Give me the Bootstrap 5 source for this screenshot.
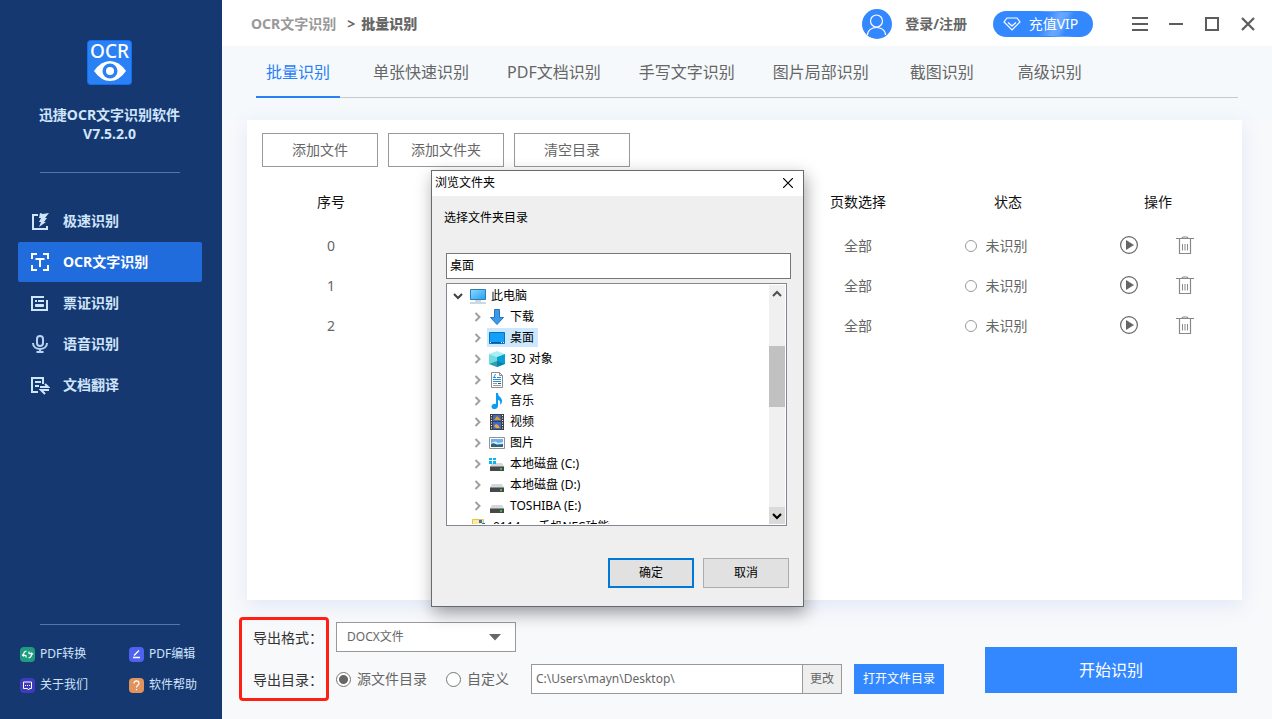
<!DOCTYPE html>
<html lang="zh-CN">
<head>
<meta charset="utf-8">
<meta name="viewport" content="width=device-width, initial-scale=1">
<title>迅捷OCR文字识别软件</title>
<link href="https://cdn.jsdelivr.net/npm/bootstrap@5.3.0/dist/css/bootstrap.min.css" rel="stylesheet">
<style>
body{font-family:"Noto Sans","Noto Sans CJK SC",sans-serif;font-size:14px;line-height:20px;color:#666;background:#f8f9fb}
svg{display:block;flex:none}
a{color:inherit;text-decoration:none}
/* sidebar */
.side{width:222px;flex:none;background:#163871;color:#cfe5fc}
.brand{padding:40px 3px 29px 0;line-height:19px}
.brand svg{margin:0 auto 20px}
.rule{height:1px;margin:0 42px 0 40px;background:#5675ac}
.menu{padding:28px 20px 0 18px;gap:1px}
.menu a{height:40px;gap:13px;padding-left:12px;border-radius:2px;font-weight:700}
.menu a.active{background:#206cdc;color:#fff}
.tools{display:grid;grid-template-columns:109px auto;row-gap:11px;padding:19px 0 24px 20px;font-size:12px}
.tools a{gap:5px}
/* title bar */
.topbar{height:46px;background:#fff;padding:2px 16px 0 29px;font-weight:700}
.crumb{gap:11px}
.crumb a{color:#999}
.crumb b{margin-left:-5px}
.user{gap:13px;margin-right:26px}
.vip{width:100px;height:26px;border-radius:13px;padding:0 5px 0 0;color:#fff;font-size:14px;line-height:20px;gap:8px;background:linear-gradient(115deg,#3388ff 50%,#6aa8ff 62%,#5ea1ff 68%,#3388ff 74%)}
.vip:hover{color:#fff}
.winbtns{gap:20px;margin-left:39px}
.winbtns button{width:16px;height:16px;padding:0;border:0;background:none}
/* tabs */
.tabzone{background:#f5f9fc;padding:0 34px 22px;height:74px}
.tabzone nav{gap:24px;height:52px;border-bottom:1px solid #c6cbd0}
.tabzone nav a{font-size:16px;min-width:84px;padding:0 7px;height:52px;line-height:52px;text-align:center;white-space:nowrap}
.tabzone nav a.active{color:#2a80f5;border-bottom:2px solid #2a80f5;margin-right:2px}
/* file list */
.files{margin:0 30px 0 25px;background:#fff;box-shadow:0 6px 20px rgba(90,130,220,.14)}
.filebtns{padding:13px 15px 0;gap:10px}
.filebtns .btn{width:116px;height:34px}
.flat{border:1px solid #999;border-radius:0;background:#fff;color:#666;font-size:14px;line-height:20px;padding:0}
.listing{padding:11px 9px 0}
.listing table{table-layout:fixed;margin:0}
.listing col.fixed{width:150px}
.listing th,.listing td{padding:0;text-align:center;vertical-align:middle;height:40px;color:#666}
.listing th{height:48px;color:#111;font-weight:400}
.state{gap:9px;padding-right:24px}
.state input{appearance:none;width:12px;height:12px;border:1px solid #999;border-radius:50%;margin:0;background:#fff}
.ops{gap:38px;padding:0 2px 2px 0}
.ops button{padding:0;border:0;background:none}
/* export */
.export{padding:17px 35px 18px 17px}
.marked{width:90px;height:84px;border:3px solid #fe2015;border-radius:4px;padding:7px 0 0 11px;line-height:22px;gap:20px;color:#333;white-space:nowrap}
.choices{padding:5px 0 0 7px;gap:12px}
.choices>div{height:30px}
.fmt{width:180px;height:30px;border:1px solid #999;border-radius:0;background:#fff;color:#666;font-size:12px;padding:0 10px;line-height:18px;appearance:none}
.fmtbox{position:relative}
.fmtbox svg{position:absolute;right:15px;top:12px;pointer-events:none}
.pick{gap:6px;margin-right:19px}
.pick+.pick{margin-right:22px}
.pick input{appearance:none;width:15px;height:15px;margin:0;border:1px solid #777;border-radius:50%;background:#fff}
.pick input:checked{background:radial-gradient(circle,#666 0 4px,#fff 5px)}
.path{width:271px;border:1px solid #999;border-right:0;padding:0 4px;font-size:12px;color:#666;background:#fff}
.change{width:40px;border:1px solid #999;background:#eee;font-size:12px;color:#666;padding:0}
.blue{background:#3388ff;color:#fff;border:0;border-radius:0;padding:0}
.blue:hover{background:#2a7af0;color:#fff}
.open{width:90px;height:30px;font-size:12px;margin-left:12px}
.start{width:252px;height:46px;font-size:16px;margin-top:30px}
/* folder dialog: a window floating over the page */
.dlg{position:absolute;left:431px;top:170px;width:373px;background:#efefef;border:1px solid #666b70;box-shadow:2px 6px 16px rgba(0,0,0,.36);font-size:12px;line-height:18px;color:#000}
.dlghead{height:25px;background:#fff;padding:0 10px 1px 3px}
.dlghead button{padding:0;border:0;background:none}
.dlgbody{padding:13px 12px 18px 14px}
.dlgbody .hint{margin:0 0 26px -2px;display:block}
.folder{width:100%;height:26px;border:1px solid #777;padding:0 3px 2px;background:#fff;color:#000}
.tree{margin:4px 4px 32px 0;height:243px;border:1px solid #828790;background:#fff;padding:1px}
.tree ul{list-style:none;margin:0;padding:0;overflow:hidden}
.tree li{height:21px;gap:5px;padding-left:26px;white-space:nowrap}
.tree li.rootrow{padding-left:5px;gap:7px}
.tree li .node{height:19px;padding:0 4px 0 2px;gap:5px}
.tree li.rootrow .node{padding-left:0}
.tree li .picked{background:#cce8ff}
.tree li.tail{padding-left:24px}
.tail .gapped{margin-left:13px}
.bar{width:16px;background:#f0f0f0;flex:none}
.thumb{height:61px;margin-top:44px;background:#c1c1c1}
.dlgbtns{gap:9px;padding-right:2px}
.dlgbtns .btn{width:86px;height:30px;border:1px solid #adadad;border-radius:0;background:#e1e1e1;font-size:12px;line-height:18px;padding:0;color:#000}
.dlgbtns .btn.main{border:2px solid #0078d7}
</style>
</head>
<body>
<svg width="0" height="0" class="position-absolute" aria-hidden="true">
<defs>
<linearGradient id="gsky" x1="0" y1="0" x2="1" y2="1"><stop offset="0" stop-color="#8fd8ff"/><stop offset="1" stop-color="#22a0f0"/></linearGradient>
<symbol id="chev" viewBox="0 0 8 10"><path d="M1.500 1l4 4-4 4" fill="none" stroke="#a0a0a0" stroke-width="2"/></symbol>
<symbol id="play" viewBox="0 0 18 18"><circle cx="9" cy="9" r="8.400" fill="none" stroke="#666" stroke-width="1.200"/><path d="M6 4v10l8-5z" fill="#666"/></symbol>
<symbol id="bin" viewBox="0 0 18 18"><path d="M0 2.500h18M6 2.500q0-1.500 1.500-1.500h3q1.500 0 1.500 1.500M3.500 2.500v15h11v-15" fill="none" stroke="#888" stroke-width="1.200"/><path d="M6.500 8v6.500M9 8v6.500M11.500 8v6.500" stroke="#888"/></symbol>
<symbol id="disk" viewBox="0 0 16 16"><path d="M3 7h10l2 3.500H1z" fill="#d5d8da"/><path d="M1 10.500h14V15H1z" fill="#46494b"/><path d="M1 10.500h14" stroke="#8c9092"/><path d="M11 13h2" stroke="#39e639" stroke-width="1.500"/></symbol>
</defs>
</svg>
<div class="d-flex min-vh-100">
<aside class="side d-flex flex-column">
<div class="brand text-center fw-bold">
<svg width="45" height="45" viewBox="0 0 45 45"><rect x=".5" y=".5" width="44" height="44" rx="3" fill="#2a80f5" stroke="#1270f3"/><text x="22.500" y="18" text-anchor="middle" font-size="19" font-weight="500" fill="#fff">OCR</text><path d="M7 31Q14 21 23 21T39 31Q32 41 23 41T7 31z" fill="#fff"/><circle cx="23" cy="31" r="7.500" fill="#2a80f5"/><circle cx="23" cy="31" r="4" fill="#fff"/></svg>
<div>迅捷OCR文字识别软件</div><div>V7.5.2.0</div>
</div>
<div class="rule"></div>
<nav class="menu d-flex flex-column">
<a href="#" class="d-flex align-items-center"><svg width="20" height="20" viewBox="0 0 20 20"><path d="M8 4H3v14h14v-3" fill="none" stroke="#cfe5fc" stroke-width="2"/><path d="M10 2l3 1 6-1-4 5h2l-3 4h2l-7 5 2-5H9l2-4H9z" fill="#cfe5fc"/></svg>极速识别</a>
<a href="#" class="active d-flex align-items-center"><svg width="20" height="20" viewBox="0 0 20 20" fill="none" stroke="#fff" stroke-width="2"><path d="M2 7V2h5M13 2h5v5M18 13v5h-5M7 18H2v-5M5.500 7h9M10 7v8"/></svg>OCR文字识别</a>
<a href="#" class="d-flex align-items-center"><svg width="20" height="20" viewBox="0 0 20 20" fill="none" stroke="#cfe5fc" stroke-width="2"><path d="M14 4H2v13h15V7"/><path d="M5 8h2M8 8h6"/><path d="M5.500 11.500h8v2h-8z" fill="#cfe5fc" stroke-width="1"/></svg>票证识别</a>
<a href="#" class="d-flex align-items-center"><svg width="20" height="20" viewBox="0 0 20 20" fill="none" stroke="#b9d4f3" stroke-width="2"><rect x="7" y="2" width="6" height="10" rx="3"/><path d="M3 9c0 8 14 8 14 0M10 15v3M6.500 18h7"/></svg>语音识别</a>
<a href="#" class="d-flex align-items-center"><svg width="20" height="20" viewBox="0 0 20 20" fill="none" stroke="#cfe5fc" stroke-width="2"><path d="M8 17H2V3h11v6M5 7h6M5 11h4M10 12h8l-3-3M19 15h-8l4 4"/></svg>文档翻译</a>
</nav>
<div class="rule mt-auto"></div>
<div class="tools">
<a href="#" class="d-flex align-items-center"><svg width="15" height="15" viewBox="0 0 15 15" fill="none" stroke="#fff"><rect width="15" height="15" rx="4" fill="#1f9b80" stroke="none"/><path d="M6.500 4Q3.500 4.500 3.500 8.500M2 7.500l1.500 1.500L5.500 8M8.500 11q3-.5 3-4.500M13 7.500L11.500 6 9.500 7M6 8v2.500M9 4.500V7" stroke-width="1.200"/></svg>PDF转换</a>
<a href="#" class="d-flex align-items-center"><svg width="15" height="15" viewBox="0 0 15 15" fill="none" stroke="#fff"><rect width="15" height="15" rx="4" fill="#4e62f0" stroke="none"/><path d="M4 10.500h7M5 8.500l5-5" stroke-width="1.400"/></svg>PDF编辑</a>
<a href="#" class="d-flex align-items-center"><svg width="15" height="15" viewBox="0 0 15 15" fill="none" stroke="#fff"><rect width="15" height="15" rx="4" fill="#3e3cba" stroke="none"/><path d="M3.500 4h8v6.500h-2l-1 1.500-1-1.500h-4z"/><path d="M5 7.500h5" stroke-dasharray="1 1"/></svg>关于我们</a>
<a href="#" class="d-flex align-items-center"><svg width="15" height="15" viewBox="0 0 15 15" fill="none" stroke="#fff"><rect width="15" height="15" rx="4" fill="#e0935c" stroke="none"/><path d="M5 5.500c0-3.500 5-3.500 5 0 0 2-2.500 1.500-2.500 4M7.500 11v1.300" stroke-width="1.200"/></svg>软件帮助</a>
</div>
</aside>

<main class="flex-grow-1 d-flex flex-column">
<header class="topbar d-flex align-items-center">
<div class="crumb d-flex"><a href="#">OCR文字识别</a><span>&gt;</span><b>批量识别</b></div>
<a href="#" class="user d-flex align-items-center ms-auto"><svg width="30" height="30" viewBox="0 0 30 30"><circle cx="15" cy="15" r="15" fill="#3388ff"/><path d="M5.500 26c0-10 18-10 18 0" fill="none" stroke="#fff" stroke-width="1.200"/><circle cx="14.500" cy="12" r="6" fill="none" stroke="#fff" stroke-width="1.200"/></svg>登录/注册</a>
<button type="button" class="btn vip d-flex align-items-center justify-content-center"><svg width="18" height="14" viewBox="0 0 18 14" fill="none" stroke="#fff" stroke-width="1.200"><path d="M4 1h10l3 4-8 8-8-8zM5 5.500L9 9l4-3.500"/></svg>充值VIP</button>
<div class="winbtns d-flex">
<button type="button" aria-label="菜单"><svg width="16" height="16" viewBox="0 0 16 16"><path d="M0 2h16M0 8h16M0 14h16" stroke="#5c5c5c" stroke-width="2"/></svg></button>
<button type="button" aria-label="最小化"><svg width="16" height="16" viewBox="0 0 16 16"><path d="M1 8h14" stroke="#5c5c5c" stroke-width="2"/></svg></button>
<button type="button" aria-label="最大化"><svg width="16" height="16" viewBox="0 0 16 16"><path d="M2 2h12v12H2z" fill="none" stroke="#5c5c5c" stroke-width="2"/></svg></button>
<button type="button" aria-label="关闭"><svg width="16" height="16" viewBox="0 0 16 16"><path d="M2 2l12 12M14 2L2 14" stroke="#5c5c5c" stroke-width="2.200"/></svg></button>
</div>
</header>

<div class="tabzone">
<nav class="d-flex"><a href="#" class="active">批量识别</a><a href="#">单张快速识别</a><a href="#">PDF文档识别</a><a href="#">手写文字识别</a><a href="#">图片局部识别</a><a href="#">截图识别</a><a href="#">高级识别</a></nav>
</div>

<section class="files flex-grow-1">
<div class="filebtns d-flex"><button type="button" class="btn flat">添加文件</button><button type="button" class="btn flat">添加文件夹</button><button type="button" class="btn flat">清空目录</button></div>
<div class="listing">
<table class="table table-borderless">
<colgroup><col class="fixed"><col><col class="fixed"><col class="fixed"><col class="fixed"></colgroup>
<thead><tr><th>序号</th><th></th><th>页数选择</th><th>状态</th><th>操作</th></tr></thead>
<tbody>
<tr><td>0</td><td></td><td>全部</td><td><label class="state d-flex align-items-center justify-content-center"><input type="radio" name="s0">未识别</label></td><td><div class="ops d-flex justify-content-center"><button type="button" aria-label="开始"><svg width="18" height="18"><use href="#play"/></svg></button><button type="button" aria-label="删除"><svg width="18" height="18"><use href="#bin"/></svg></button></div></td></tr>
<tr><td>1</td><td></td><td>全部</td><td><label class="state d-flex align-items-center justify-content-center"><input type="radio" name="s1">未识别</label></td><td><div class="ops d-flex justify-content-center"><button type="button" aria-label="开始"><svg width="18" height="18"><use href="#play"/></svg></button><button type="button" aria-label="删除"><svg width="18" height="18"><use href="#bin"/></svg></button></div></td></tr>
<tr><td>2</td><td></td><td>全部</td><td><label class="state d-flex align-items-center justify-content-center"><input type="radio" name="s2">未识别</label></td><td><div class="ops d-flex justify-content-center"><button type="button" aria-label="开始"><svg width="18" height="18"><use href="#play"/></svg></button><button type="button" aria-label="删除"><svg width="18" height="18"><use href="#bin"/></svg></button></div></td></tr>
</tbody>
</table>
</div>
</section>

<footer class="export d-flex align-items-start">
<div class="marked d-flex flex-column"><label for="fmt">导出格式：</label><span id="dirlabel">导出目录：</span></div>
<div class="choices d-flex flex-column">
<div class="d-flex"><div class="fmtbox"><select id="fmt" class="fmt"><option>DOCX文件</option></select><svg width="12" height="7" viewBox="0 0 12 7"><path d="M0 0h12L6 6.500z" fill="#666"/></svg></div></div>
<div class="d-flex" role="group" aria-labelledby="dirlabel">
<label class="pick d-flex align-items-center"><input type="radio" name="dir" checked>源文件目录</label>
<label class="pick d-flex align-items-center"><input type="radio" name="dir">自定义</label>
<input type="text" class="path rounded-0" aria-label="导出目录" value="C:\Users\mayn\Desktop\"><button type="button" class="change">更改</button>
<button type="button" class="btn blue open">打开文件目录</button>
</div>
</div>
<button type="button" class="btn blue start ms-auto">开始识别</button>
</footer>
</main>
</div>

<div class="dlg" role="dialog" aria-labelledby="dlgtitle">
<div class="dlghead d-flex align-items-center justify-content-between"><span id="dlgtitle">浏览文件夹</span><button type="button" aria-label="关闭"><svg width="10" height="10" viewBox="0 0 10 10"><path d="M0 0l10 10M10 0L0 10" stroke="#000" stroke-width="1.200"/></svg></button></div>
<div class="dlgbody">
<label class="hint" for="folder">选择文件夹目录</label>
<input type="text" id="folder" class="folder" value="桌面">
<div class="tree d-flex">
<ul class="flex-grow-1">
<li class="rootrow d-flex align-items-center"><svg width="10" height="10" viewBox="0 0 10 10"><path d="M1 3l4 4 4-4" fill="none" stroke="#404040" stroke-width="2"/></svg><span class="node d-flex align-items-center"><svg width="16" height="16" viewBox="0 0 16 16"><path d="M.5 1.500h15v10H.5z" fill="url(#gsky)" stroke="#2b7fb4"/><path d="M5 13h6M0 15h16" stroke="#9db0bd"/></svg>此电脑</span></li>
<li class="d-flex align-items-center"><svg width="8" height="10"><use href="#chev"/></svg><span class="node d-flex align-items-center"><svg width="16" height="16" viewBox="0 0 16 16"><path d="M5.500.5h5v8h4L8 15.500 1.500 8.500h4z" fill="#3b99ea" stroke="#2475bd"/></svg>下载</span></li>
<li class="d-flex align-items-center"><svg width="8" height="10"><use href="#chev"/></svg><span class="node picked d-flex align-items-center"><svg width="16" height="16" viewBox="0 0 16 16"><path d="M.5 2.500h15v11H.5z" fill="#12a0fb" stroke="#0873b8"/><path d="M1 12.500h14" stroke="#045a96"/><path d="M1 12.500h2M12 12.500h3" stroke="#fff" stroke-dasharray="1 1"/></svg>桌面</span></li>
<li class="d-flex align-items-center"><svg width="8" height="10"><use href="#chev"/></svg><span class="node d-flex align-items-center"><svg width="16" height="16" viewBox="0 0 16 16"><path d="M8 0l8 3-8 3-8-3z" fill="#a8eef3"/><path d="M0 3l8 3v10l-8-3z" fill="#6fdce0"/><path d="M16 3L8 6v10l8-3z" fill="#08a0d0"/><path d="M0 13l8-3 8 3-8 3z" fill="#0b6f94" opacity=".6"/></svg>3D 对象</span></li>
<li class="d-flex align-items-center"><svg width="8" height="10"><use href="#chev"/></svg><span class="node d-flex align-items-center"><svg width="16" height="16" viewBox="0 0 16 16"><path d="M2.500.5h8l3 3v12h-11z" fill="#fff" stroke="#8b8b8b"/><path d="M10.500.5v3h3" fill="none" stroke="#8b8b8b"/><path d="M4 5.500h3M8 5.500h4M4 7.500h8M4 9.500h8" stroke="#2a8bd8"/><path d="M4.500 6l2-4" stroke="#2a8bd8"/><path d="M4 11.500h4M4 13.500h8" stroke="#8f9aa0"/><path d="M9 11.500h3" stroke="#1b5d73"/></svg>文档</span></li>
<li class="d-flex align-items-center"><svg width="8" height="10"><use href="#chev"/></svg><span class="node d-flex align-items-center"><svg width="16" height="16" viewBox="0 0 16 16"><path d="M7 0h2c0 4 4 4 4 8 0 2-1 3-2 4 1-4-1-5-2-5v6c0 4-7 4-6.500.5C3 11 5.500 10.500 7 11z" fill="#0c9cf5"/></svg>音乐</span></li>
<li class="d-flex align-items-center"><svg width="8" height="10"><use href="#chev"/></svg><span class="node d-flex align-items-center"><svg width="16" height="16" viewBox="0 0 16 16"><path d="M1 0h14v16H1z" fill="#404040"/><path d="M2.500 1v15M13.500 1v15" stroke="#fff" stroke-dasharray="1 1.500"/><path d="M4 1h8v6H4zM4 8h8v7H4z" fill="#3d68cc"/><path d="M5 6l3-4 4 4z" fill="#d99b22"/><path d="M5 12l2-2 2 1 2 3H7z" fill="#e4ae39"/></svg>视频</span></li>
<li class="d-flex align-items-center"><svg width="8" height="10"><use href="#chev"/></svg><span class="node d-flex align-items-center"><svg width="16" height="16" viewBox="0 0 16 16"><path d="M.5 2.500h15v11H.5z" fill="#fff" stroke="#929292"/><path d="M2 4h12v8H2z" fill="#6faef0"/><path d="M2 8q5-3 7 0l5-1v2H2z" fill="#d5edfb"/><path d="M2 9q3-2 6 1l6-1v3H2z" fill="#2f6475"/></svg>图片</span></li>
<li class="d-flex align-items-center"><svg width="8" height="10"><use href="#chev"/></svg><span class="node d-flex align-items-center"><svg width="16" height="16" viewBox="0 0 16 16"><use href="#disk"/><path d="M0 2h3v2H0zM4 2h3v2H4zM0 5h3v3H0zM4 5h3v3H4z" fill="#08b5ee"/></svg>本地磁盘 (C:)</span></li>
<li class="d-flex align-items-center"><svg width="8" height="10"><use href="#chev"/></svg><span class="node d-flex align-items-center"><svg width="16" height="16"><use href="#disk"/></svg>本地磁盘 (D:)</span></li>
<li class="d-flex align-items-center"><svg width="8" height="10"><use href="#chev"/></svg><span class="node d-flex align-items-center"><svg width="16" height="16"><use href="#disk"/></svg>TOSHIBA (E:)</span></li>
<li class="tail d-flex align-items-center"><span class="node d-flex align-items-center p-0"><svg width="16" height="16" viewBox="0 0 16 16"><path d="M.5.5h11v15H.5z" fill="#ffe9a2" stroke="#e8c14f"/><path d="M7 1h3v3H7zM10 4h3v3h-3z" fill="#2878b8"/></svg>0114<span class="gapped">手机NFC功能</span></span></li>
</ul>
<div class="bar d-flex flex-column">
<svg width="16" height="17" viewBox="0 0 16 17"><path d="M4 11l4-4 4 4" fill="none" stroke="#505050" stroke-width="2"/></svg>
<div class="thumb"></div>
<svg class="mt-auto" width="16" height="17" viewBox="0 0 16 17"><path d="M0 0h16v17H0z" fill="#dadada"/><path d="M4 7l4 4 4-4" fill="none" stroke="#000" stroke-width="2.200"/></svg>
</div>
</div>
<div class="dlgbtns d-flex justify-content-end"><button type="button" class="btn main">确定</button><button type="button" class="btn">取消</button></div>
</div>
</div>
<script src="https://cdn.jsdelivr.net/npm/bootstrap@5.3.0/dist/js/bootstrap.bundle.min.js"></script>
</body>
</html>
